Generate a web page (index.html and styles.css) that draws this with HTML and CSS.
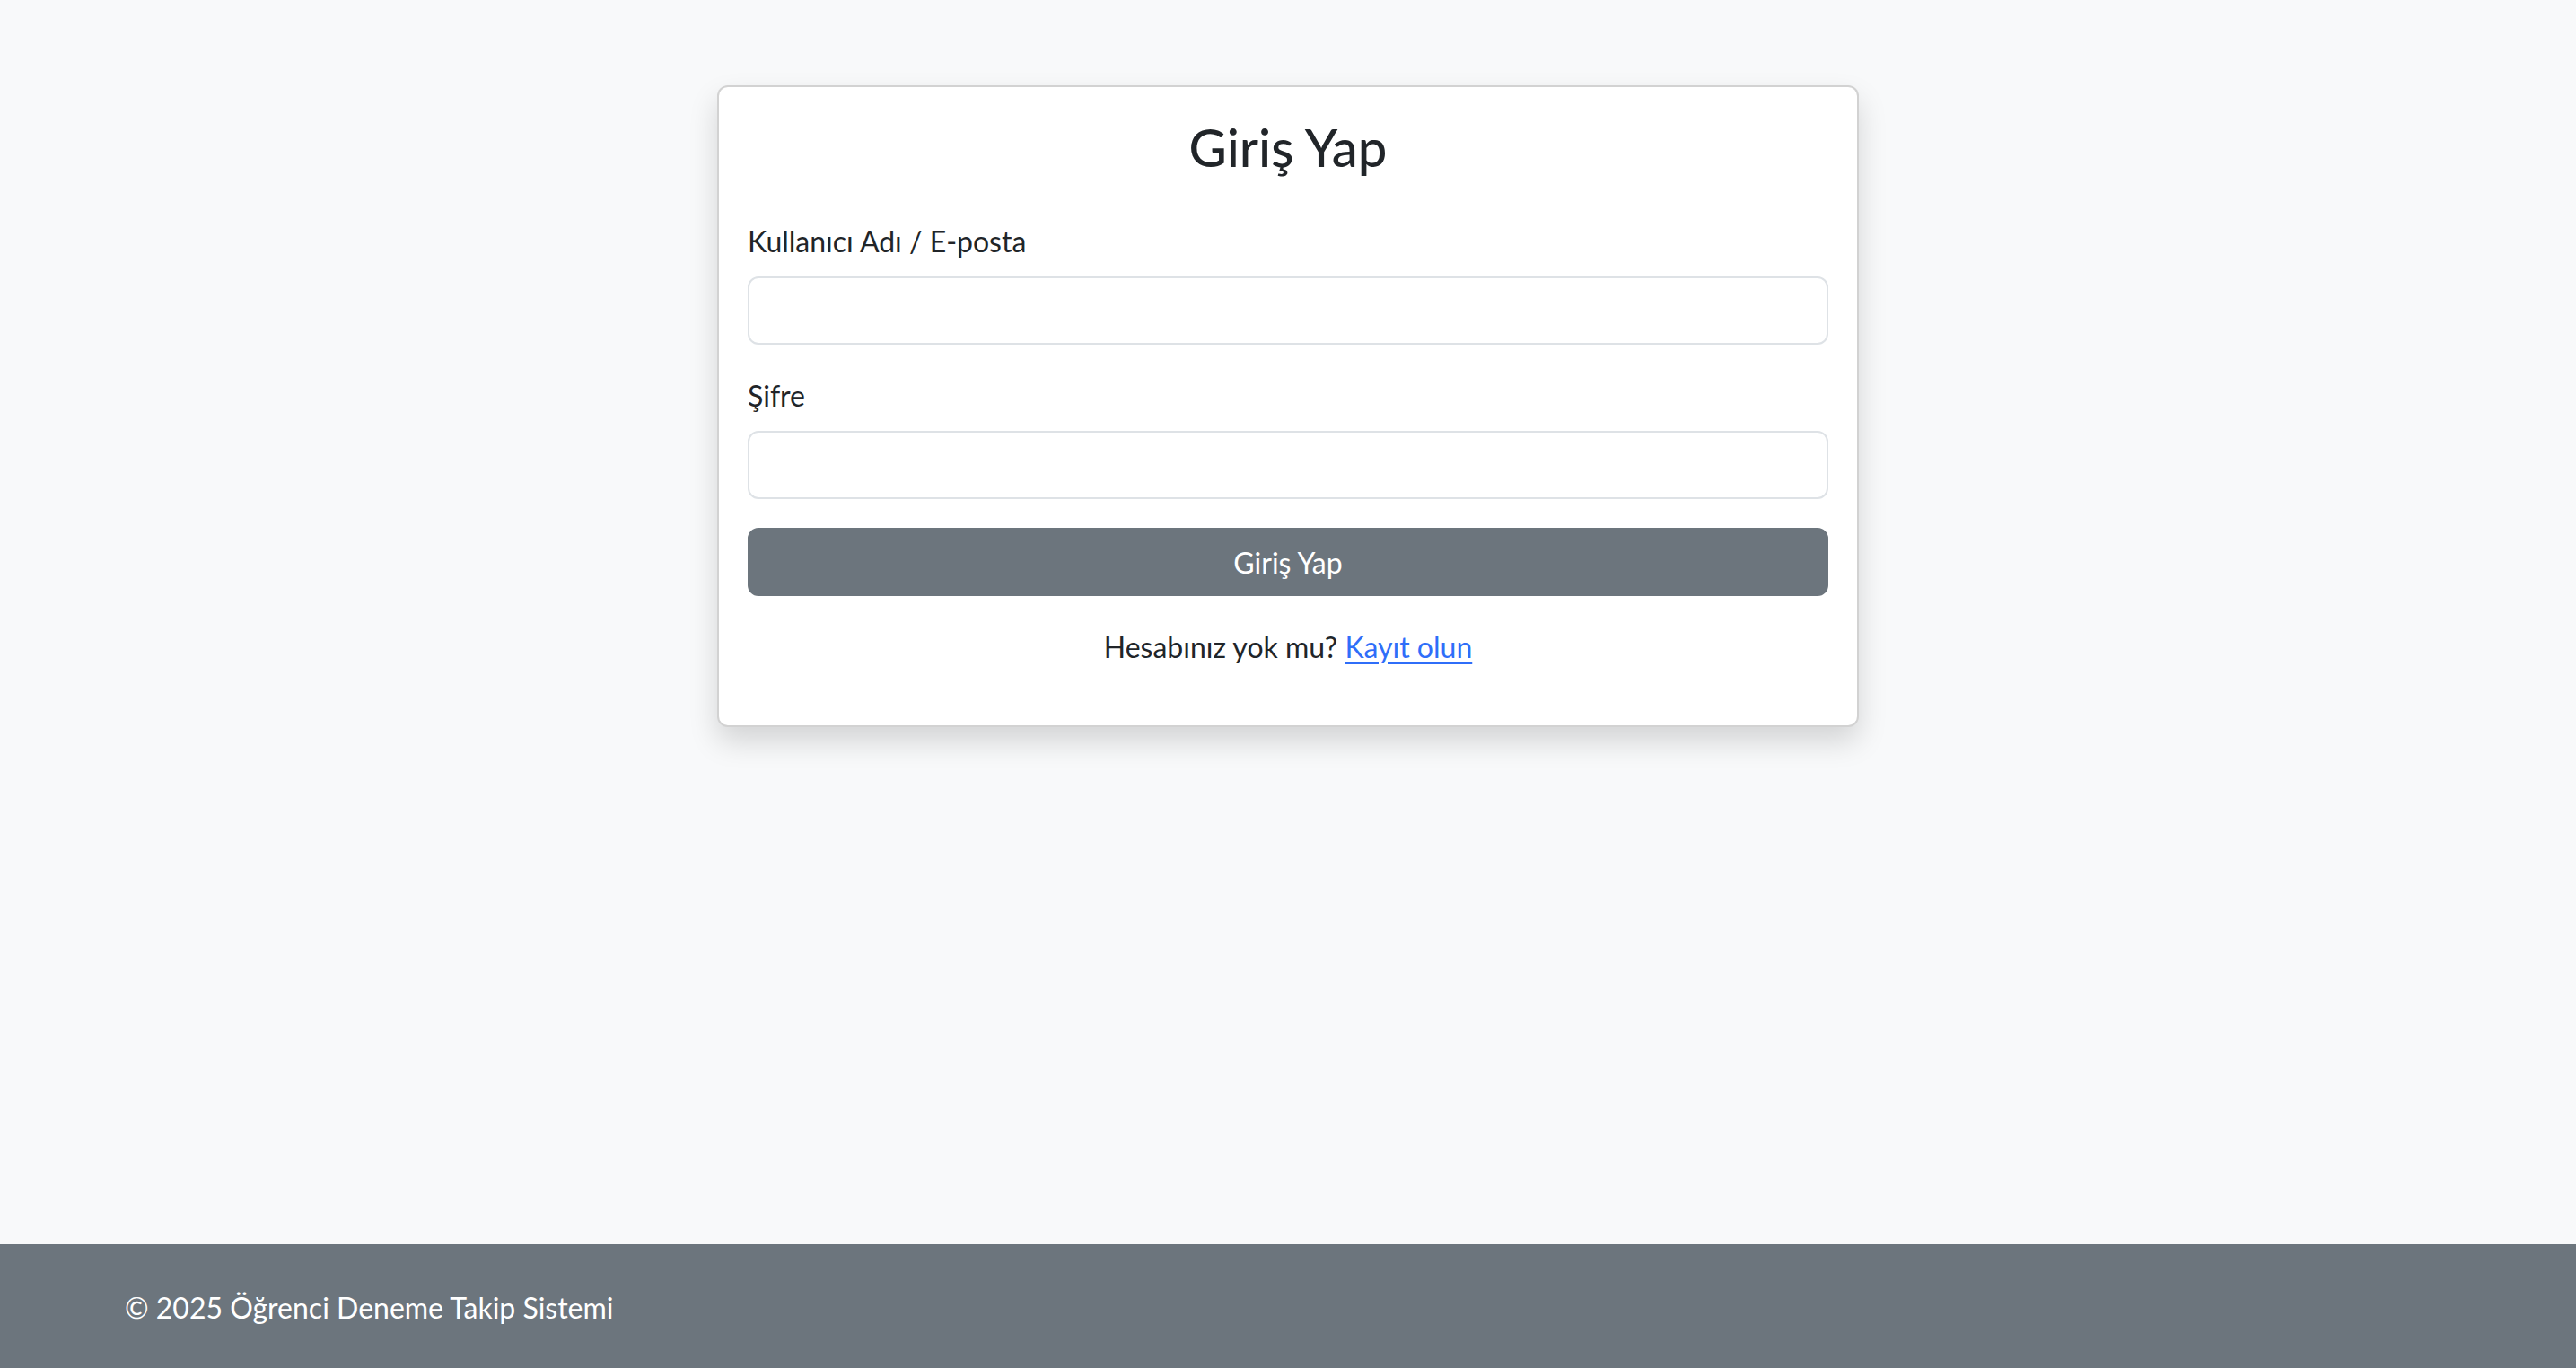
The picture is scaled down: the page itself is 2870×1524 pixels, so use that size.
FILE: index.html
```html
<!DOCTYPE html>
<html lang="tr">
<head>
<meta charset="utf-8">
<title>Giriş Yap</title>
<link rel="stylesheet" href="styles.css">
</head>
<body>
<main class="main">
  <div class="card">
    <div class="card-body">
      <h2 class="title">Giriş Yap</h2>
      <form class="form">
        <div class="field">
          <label class="label" for="user">Kullanıcı Adı / E-posta</label>
          <input class="input" id="user" type="text">
        </div>
        <div class="field">
          <label class="label" for="pass">Şifre</label>
          <input class="input" id="pass" type="password">
        </div>
        <button class="btn" type="button">Giriş Yap</button>
      </form>
      <p class="register">Hesabınız yok mu? <a class="link" href="#">Kayıt olun</a></p>
    </div>
  </div>
</main>
<footer class="footer">
  <div class="footer-inner">© 2025 Öğrenci Deneme Takip Sistemi</div>
</footer>
</body>
</html>
```
FILE: styles.css
```css
* { box-sizing: border-box; }
html, body { margin: 0; padding: 0; }
body {
  min-height: 100vh;
  display: flex;
  flex-direction: column;
  background: #f8f9fa;
  color: #212529;
  font-family: "Lato", "Roboto", sans-serif;
  font-size: 32px;
  line-height: 48px;
}
.main { flex: 1; }
.card {
  width: 1272px;
  margin: 95px auto 0;
  background: #fff;
  border: 2px solid rgba(0, 0, 0, 0.175);
  border-radius: 12px;
  box-shadow: 0 16px 32px rgba(0, 0, 0, 0.15);
}
.card-body { padding: 32px; }
.title {
  margin: 0 0 45px;
  font-size: 58px;
  line-height: 70px;
  font-weight: 500;
  text-align: center;
}
.form { display: flex; flex-direction: column; }
.field { display: flex; flex-direction: column; margin-bottom: 32px; }
.label { margin-bottom: 16px; padding-top: 2px; line-height: 46px; }
.input {
  height: 76px;
  border: 2px solid #dee2e6;
  border-radius: 12px;
  background: #fff;
  font: inherit;
  padding: 12px 24px;
}
.btn {
  height: 76px;
  border: 2px solid #6c757d;
  border-radius: 12px;
  background: #6c757d;
  color: #fff;
  font: inherit;
  padding: 2px 0 0;
}
.register {
  margin: 32px 0;
  padding-top: 2px;
  line-height: 46px;
  text-align: center;
}
.link { color: #2f6ef9; text-decoration: underline; text-underline-offset: 4px; }
.footer {
  height: 138px;
  background: #6c757d;
  color: #fff;
  display: flex;
  align-items: center;
}
.footer-inner {
  width: 2640px;
  margin: 0 auto;
  padding: 4px 24px 0;
}
```
